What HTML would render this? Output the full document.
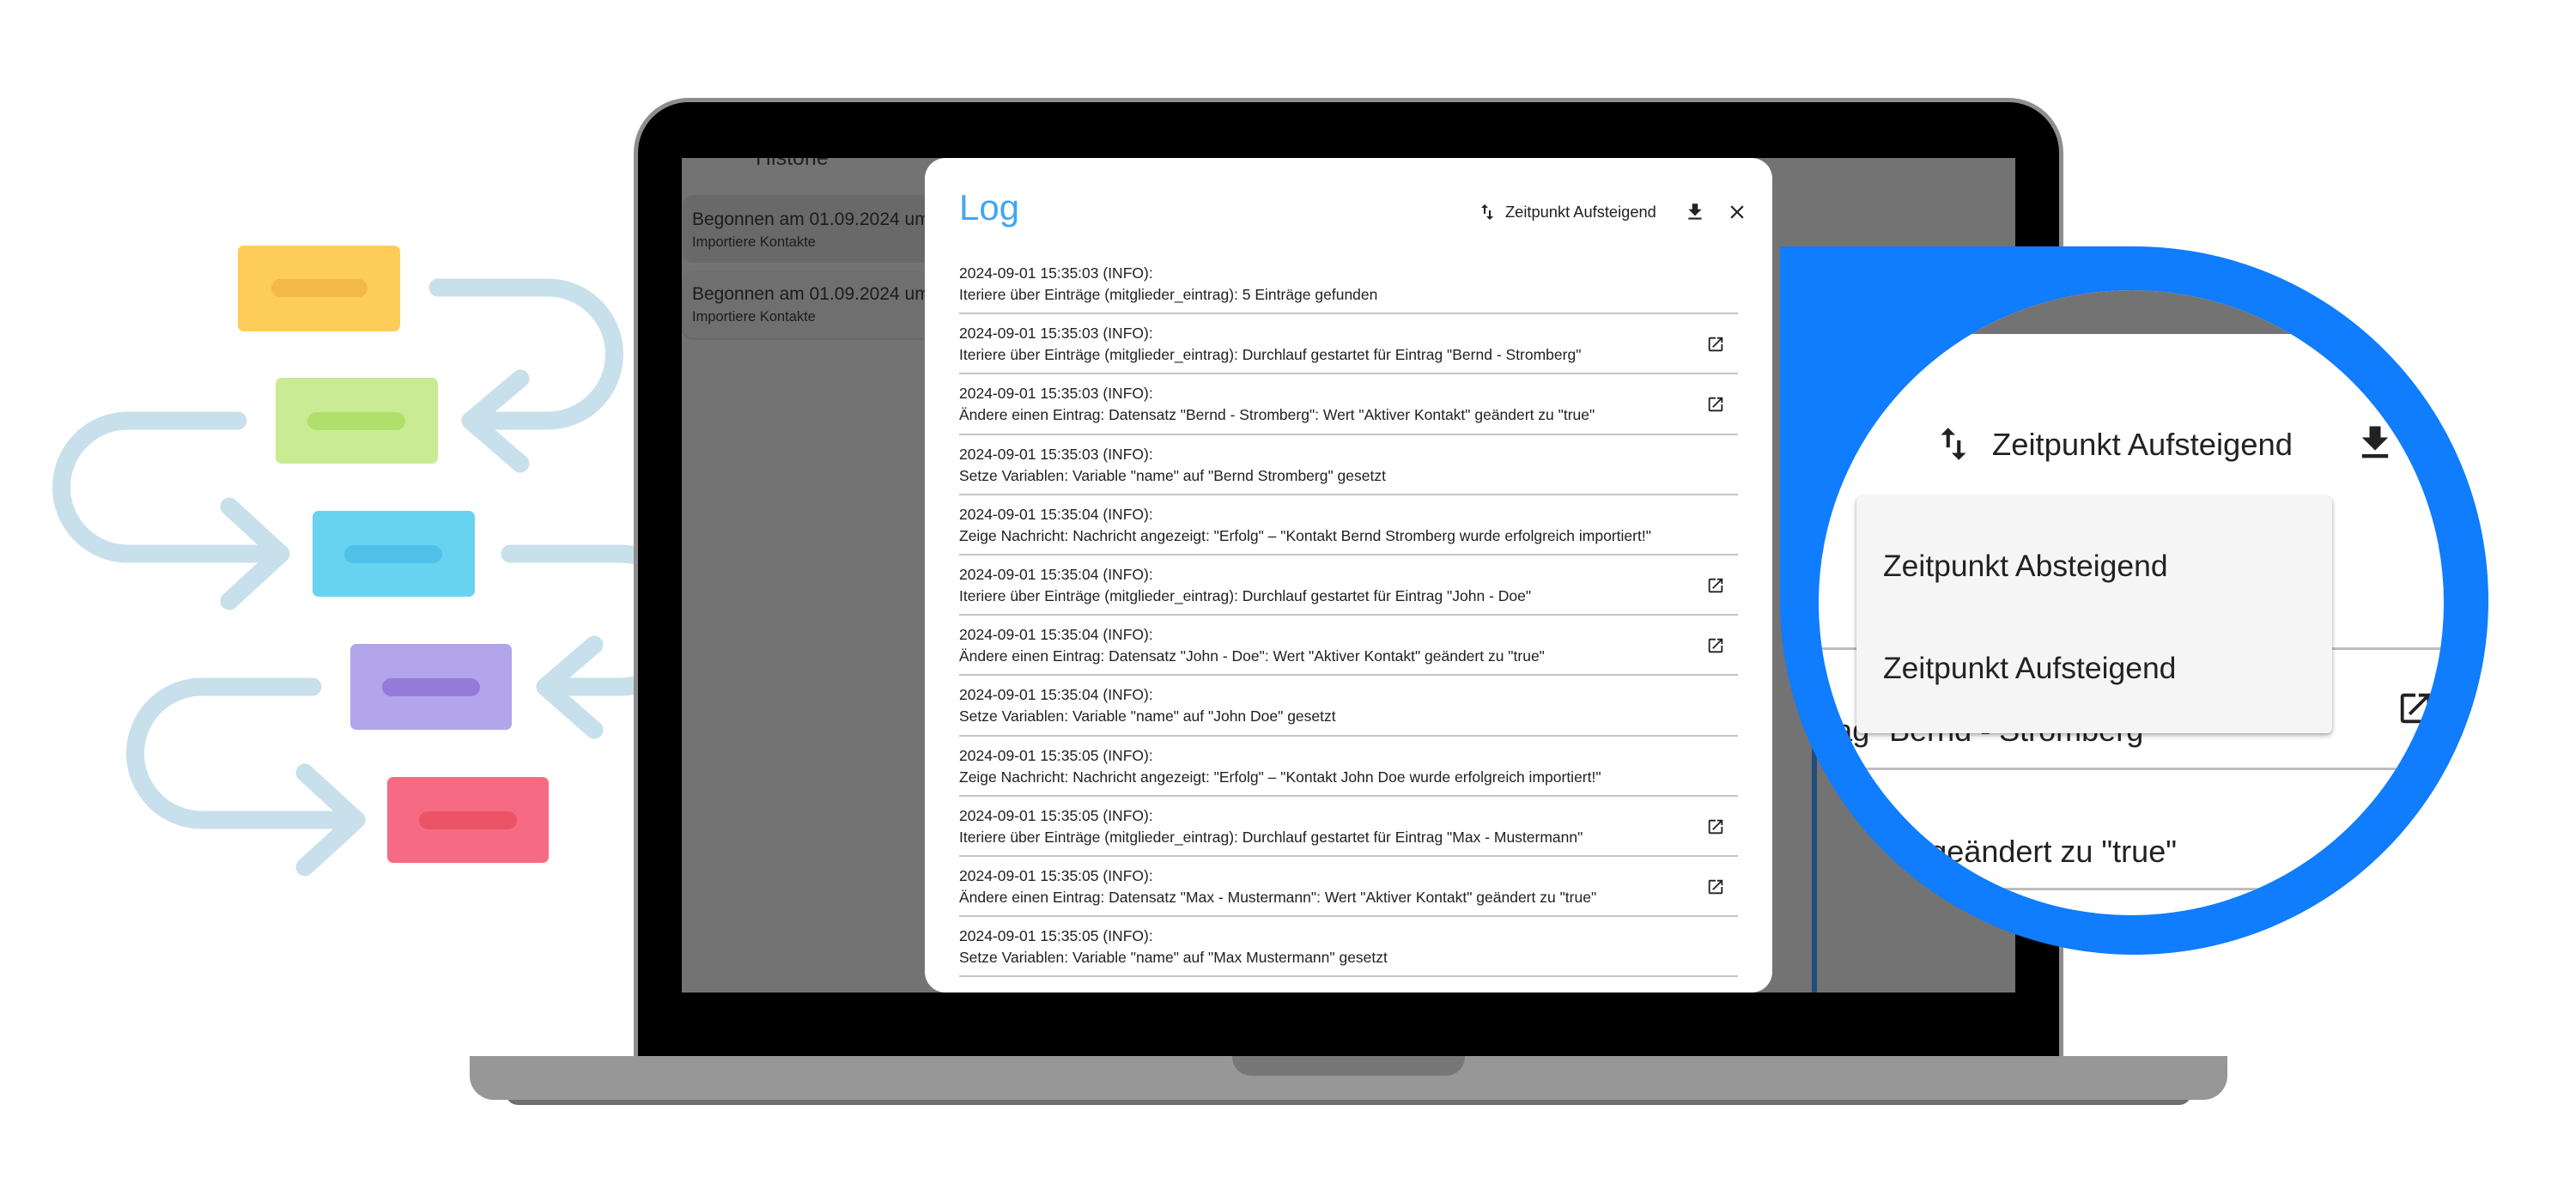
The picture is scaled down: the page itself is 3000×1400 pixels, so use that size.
<!DOCTYPE html>
<html><head><meta charset="utf-8"><style>
*{margin:0;padding:0;box-sizing:border-box}
body{width:3000px;height:1400px;background:#fff;position:relative;overflow:hidden;font-family:"Liberation Sans",Arial,sans-serif;color:#212121}
.abs{position:absolute}
.entry{position:absolute;left:40px;width:907px;height:70.2px;border-bottom:2px solid #c4c4c4;font-size:17.5px;line-height:25px;padding-top:10px;white-space:nowrap}
.entry svg{position:absolute;right:15px;top:24px;width:22px;height:22px}
.card{position:absolute;left:1px;width:300px;border-radius:12px;padding-left:11px;white-space:nowrap;color:#1c1c1c;overflow:hidden}
</style></head><body>

<svg class="abs" style="left:0;top:0" width="760" height="1100" viewBox="0 0 760 1100">
<g fill="none" stroke="#c8e0eb" stroke-width="21" stroke-linecap="round" stroke-linejoin="round">
<path d="M510 335 H638 A77.5 77.5 0 0 1 638 490 H548"/><path d="M606 441 L548 490 L606 540"/>
<path d="M277 490 H149 A77.5 77.5 0 0 0 149 645 H327"/><path d="M267 590 L327 645 L267 700"/>
<path d="M594 645 H722 A77.5 77.5 0 0 1 722 800 H635"/><path d="M692 751 L635 800 L692 850"/>
<path d="M364 800 H235 A77.5 77.5 0 0 0 235 955 H415"/><path d="M355 900 L415 955 L355 1010"/>
</g>
<rect x="277" y="286" width="189" height="100" rx="7" fill="#fecd59"/><rect x="316" y="325" width="112" height="21" rx="10.5" fill="#f4b846"/>
<rect x="321" y="440" width="189" height="100" rx="7" fill="#c9eb93"/><rect x="358" y="480" width="114" height="21" rx="10.5" fill="#b0e06b"/>
<rect x="364" y="595" width="189" height="100" rx="7" fill="#68d3f0"/><rect x="401" y="635" width="114" height="21" rx="10.5" fill="#4fc0e8"/>
<rect x="408" y="750" width="188" height="100" rx="7" fill="#b2a5ec"/><rect x="445" y="790" width="114" height="21" rx="10.5" fill="#967ad9"/>
<rect x="451" y="905" width="188" height="100" rx="7" fill="#f66b83"/><rect x="488" y="945" width="114" height="21" rx="10.5" fill="#ea5466"/>
</svg>

<!-- laptop -->
<div class="abs" style="left:589px;top:1270px;width:1963px;height:17px;background:#6e6e6e;border-radius:0 0 14px 14px"></div>
<div class="abs" style="left:547px;top:1230px;width:2047px;height:51px;background:#979797;border-radius:0 0 28px 28px"></div>
<div class="abs" style="left:1435px;top:1230px;width:271px;height:23px;background:#777;border-radius:0 0 22px 22px"></div>
<div class="abs" style="left:738px;top:114px;width:1665px;height:1116px;background:#000;border:5px solid #8e8e8e;border-bottom:none;border-radius:64px 64px 0 0"></div>

<!-- screen -->
<div class="abs" style="left:794px;top:184px;width:1553px;height:972px;background:#737373;overflow:hidden">
  <div class="abs" style="left:86px;top:-14px;font-size:25px;color:#222">Historie</div>
  <div class="card" style="top:43px;height:79px;background:#696969">
    <div style="font-size:21px;margin-top:15px;line-height:27px">Begonnen am 01.09.2024 um</div>
    <div style="font-size:16.5px;line-height:26px">Importiere Kontakte</div>
  </div>
  <div class="card" style="top:132px;height:78px;background:#6f6f6f;box-shadow:0 1px 2px rgba(0,0,0,.2)">
    <div style="font-size:21px;margin-top:13px;line-height:27px">Begonnen am 01.09.2024 um</div>
    <div style="font-size:16.5px;line-height:26px">Importiere Kontakte</div>
  </div>
  <div class="abs" style="left:1316px;top:600px;width:6px;height:400px;background:#1f4e79"></div>

  <div class="abs" style="left:283px;top:0;width:987px;height:972px;background:#fff;border-radius:24px">
    <div class="abs" style="left:40px;top:30px;font-size:42px;color:#42a5f5;line-height:56px">Log</div>
    <svg class="abs" style="left:643px;top:51px" width="24" height="24" viewBox="0 0 24 24"><path d="M16 17.01V10h-2v7.01h-3L15 21l4-3.99h-3zM9 3L5 6.99h3V14h2V6.99h3L9 3z" fill="#222"/></svg>
    <div class="abs" style="left:676px;top:52px;font-size:18.3px;line-height:22px;white-space:nowrap">Zeitpunkt Aufsteigend</div>
    <svg class="abs" style="left:884px;top:50px" width="26" height="26" viewBox="0 0 24 24"><path d="M19 9h-4V3H9v6H5l7 7 7-7zM5 18v2h14v-2H5z" fill="#222"/></svg>
    <svg class="abs" style="left:933px;top:50px" width="26" height="26" viewBox="0 0 24 24"><path d="M19 6.41L17.59 5 12 10.59 6.41 5 5 6.41 10.59 12 5 17.59 6.41 19 12 13.41 17.59 19 19 17.59 13.41 12z" fill="#222"/></svg>

    <div class="entry" style="top:112px">2024-09-01 15:35:03 (INFO):<br>Iteriere über Einträge (mitglieder_eintrag): 5 Einträge gefunden</div>
    <div class="entry" style="top:182.2px">2024-09-01 15:35:03 (INFO):<br>Iteriere über Einträge (mitglieder_eintrag): Durchlauf gestartet für Eintrag "Bernd - Stromberg"<svg viewBox="0 0 24 24"><path d="M19 19H5V5h7V3H5c-1.11 0-2 .9-2 2v14c0 1.1.89 2 2 2h14c1.1 0 2-.9 2-2v-7h-2v7zM14 3v2h3.59l-9.83 9.83 1.41 1.41L19 6.41V10h2V3h-7z" fill="#222"/></svg></div>
    <div class="entry" style="top:252.4px">2024-09-01 15:35:03 (INFO):<br>Ändere einen Eintrag: Datensatz "Bernd - Stromberg": Wert "Aktiver Kontakt" geändert zu "true"<svg viewBox="0 0 24 24"><path d="M19 19H5V5h7V3H5c-1.11 0-2 .9-2 2v14c0 1.1.89 2 2 2h14c1.1 0 2-.9 2-2v-7h-2v7zM14 3v2h3.59l-9.83 9.83 1.41 1.41L19 6.41V10h2V3h-7z" fill="#222"/></svg></div>
    <div class="entry" style="top:322.6px">2024-09-01 15:35:03 (INFO):<br>Setze Variablen: Variable "name" auf "Bernd Stromberg" gesetzt</div>
    <div class="entry" style="top:392.8px">2024-09-01 15:35:04 (INFO):<br>Zeige Nachricht: Nachricht angezeigt: "Erfolg" – "Kontakt Bernd Stromberg wurde erfolgreich importiert!"</div>
    <div class="entry" style="top:463px">2024-09-01 15:35:04 (INFO):<br>Iteriere über Einträge (mitglieder_eintrag): Durchlauf gestartet für Eintrag "John - Doe"<svg viewBox="0 0 24 24"><path d="M19 19H5V5h7V3H5c-1.11 0-2 .9-2 2v14c0 1.1.89 2 2 2h14c1.1 0 2-.9 2-2v-7h-2v7zM14 3v2h3.59l-9.83 9.83 1.41 1.41L19 6.41V10h2V3h-7z" fill="#222"/></svg></div>
    <div class="entry" style="top:533.2px">2024-09-01 15:35:04 (INFO):<br>Ändere einen Eintrag: Datensatz "John - Doe": Wert "Aktiver Kontakt" geändert zu "true"<svg viewBox="0 0 24 24"><path d="M19 19H5V5h7V3H5c-1.11 0-2 .9-2 2v14c0 1.1.89 2 2 2h14c1.1 0 2-.9 2-2v-7h-2v7zM14 3v2h3.59l-9.83 9.83 1.41 1.41L19 6.41V10h2V3h-7z" fill="#222"/></svg></div>
    <div class="entry" style="top:603.4px">2024-09-01 15:35:04 (INFO):<br>Setze Variablen: Variable "name" auf "John Doe" gesetzt</div>
    <div class="entry" style="top:673.6px">2024-09-01 15:35:05 (INFO):<br>Zeige Nachricht: Nachricht angezeigt: "Erfolg" – "Kontakt John Doe wurde erfolgreich importiert!"</div>
    <div class="entry" style="top:743.8px">2024-09-01 15:35:05 (INFO):<br>Iteriere über Einträge (mitglieder_eintrag): Durchlauf gestartet für Eintrag "Max - Mustermann"<svg viewBox="0 0 24 24"><path d="M19 19H5V5h7V3H5c-1.11 0-2 .9-2 2v14c0 1.1.89 2 2 2h14c1.1 0 2-.9 2-2v-7h-2v7zM14 3v2h3.59l-9.83 9.83 1.41 1.41L19 6.41V10h2V3h-7z" fill="#222"/></svg></div>
    <div class="entry" style="top:814px">2024-09-01 15:35:05 (INFO):<br>Ändere einen Eintrag: Datensatz "Max - Mustermann": Wert "Aktiver Kontakt" geändert zu "true"<svg viewBox="0 0 24 24"><path d="M19 19H5V5h7V3H5c-1.11 0-2 .9-2 2v14c0 1.1.89 2 2 2h14c1.1 0 2-.9 2-2v-7h-2v7zM14 3v2h3.59l-9.83 9.83 1.41 1.41L19 6.41V10h2V3h-7z" fill="#222"/></svg></div>
    <div class="entry" style="top:884.2px">2024-09-01 15:35:05 (INFO):<br>Setze Variablen: Variable "name" auf "Max Mustermann" gesetzt</div>
  </div>
</div>

<!-- magnifier -->
<div class="abs" style="left:2073px;top:287px;width:412px;height:412px;background:#107cfe"></div>
<div class="abs" style="left:2073px;top:287px;width:825px;height:825px;background:#107cfe;border-radius:50%"></div>
<div class="abs" style="left:2118px;top:338px;width:728px;height:728px;background:#fff;border-radius:50%;overflow:hidden">
  <div class="abs" style="left:0;top:0;width:728px;height:51px;background:#737373"></div>
  <svg class="abs" style="left:132px;top:154px" width="50" height="50" viewBox="0 0 24 24"><path d="M16 17.01V10h-2v7.01h-3L15 21l4-3.99h-3zM9 3L5 6.99h3V14h2V6.99h3L9 3z" fill="#222"/></svg>
  <div class="abs" style="left:202px;top:159px;font-size:36.4px;line-height:42px;white-space:nowrap;color:#222">Zeitpunkt Aufsteigend</div>
  <svg class="abs" style="left:622px;top:152px" width="52" height="52" viewBox="0 0 24 24"><path d="M19 9h-4V3H9v6H5l7 7 7-7zM5 18v2h14v-2H5z" fill="#222"/></svg>
  <div class="abs" style="left:0;top:416px;width:728px;height:3px;background:#bdbdbd"></div>
  <div class="abs" style="left:0;top:556px;width:728px;height:3px;background:#bdbdbd"></div>
  <div class="abs" style="left:0;top:696px;width:728px;height:3px;background:#bdbdbd"></div>
  <div class="abs" style="right:337px;top:492px;font-size:36px;line-height:42px;white-space:nowrap;color:#222">Durchlauf gestartet für Eintrag "Bernd - Stromberg"</div>
  <svg class="abs" style="left:672px;top:464px" width="46" height="46" viewBox="0 0 24 24"><path d="M19 19H5V5h7V3H5c-1.11 0-2 .9-2 2v14c0 1.1.89 2 2 2h14c1.1 0 2-.9 2-2v-7h-2v7zM14 3v2h3.59l-9.83 9.83 1.41 1.41L19 6.41V10h2V3h-7z" fill="#222"/></svg>
  <div class="abs" style="right:311px;top:633px;font-size:36px;line-height:42px;white-space:nowrap;color:#222">Wert "Aktiver Kontakt" geändert zu "true"</div>
  <div class="abs" style="left:44px;top:240px;width:554px;height:276px;background:#f5f5f5;border-radius:6px;box-shadow:0 3px 6px rgba(0,0,0,.25),0 1px 3px rgba(0,0,0,.15)">
    <div class="abs" style="left:31px;top:60px;font-size:35.5px;line-height:42px;white-space:nowrap;color:#222">Zeitpunkt Absteigend</div>
    <div class="abs" style="left:31px;top:179px;font-size:35.5px;line-height:42px;white-space:nowrap;color:#222">Zeitpunkt Aufsteigend</div>
  </div>
</div>
</body></html>
